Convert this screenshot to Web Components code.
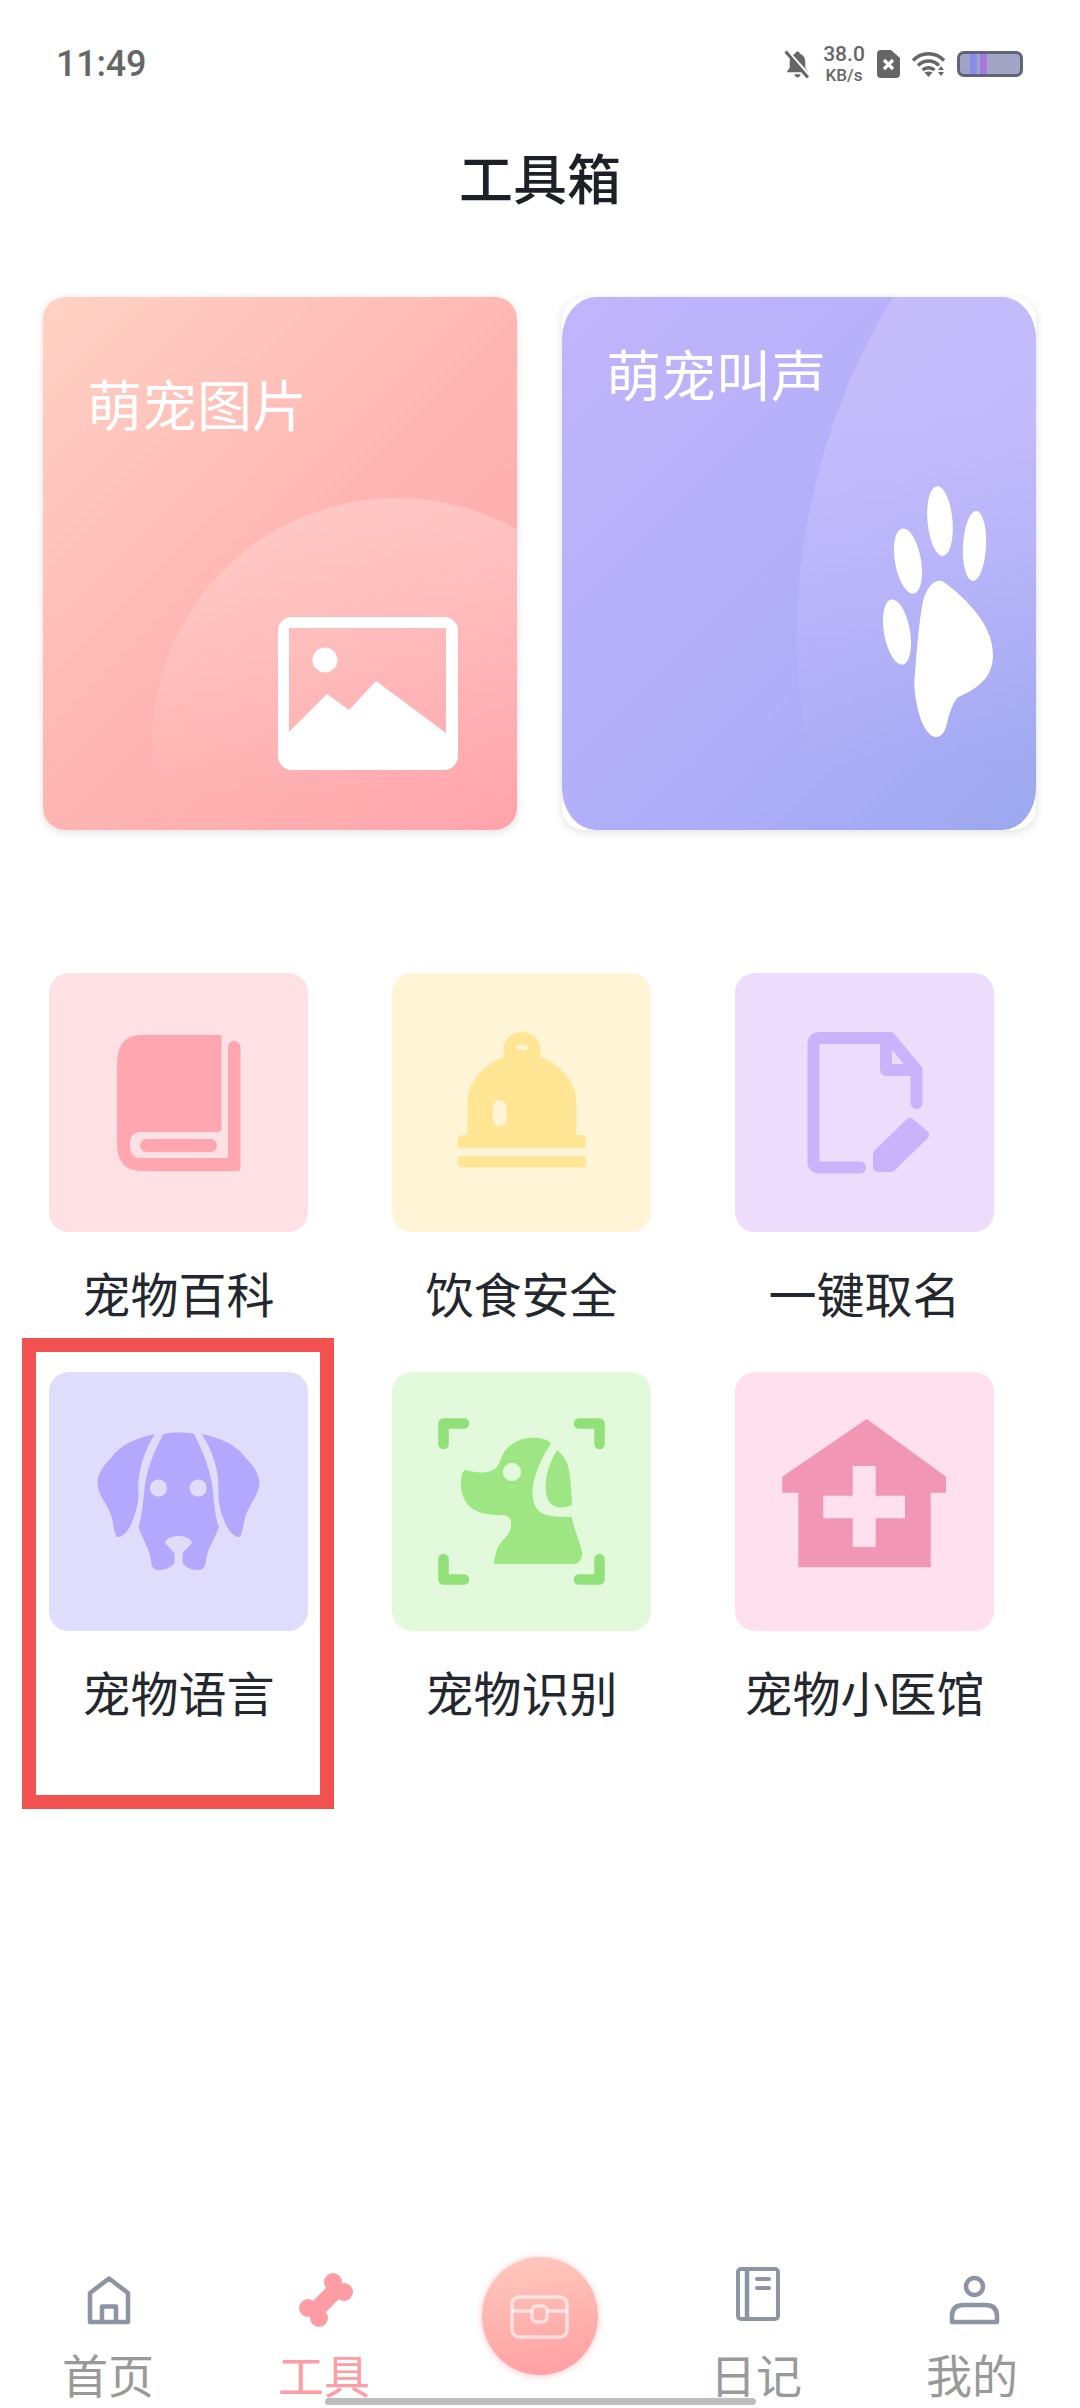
<!doctype html>
<html lang="zh-CN"><head><meta charset="utf-8"><title>工具箱</title>
<style>
html,body{margin:0;padding:0;background:#fff}
body{font-family:"Noto Sans CJK SC","Noto Sans",sans-serif}
svg{display:block}
</style></head><body>
<template id="t-page"><style>
:host{display:flex;flex-direction:column;width:1080px;height:2408px;position:relative;overflow:hidden;background:#fff;font-family:"Noto Sans CJK SC","Noto Sans",sans-serif}
</style><slot></slot></template>

<template id="t-status"><style>
:host{display:flex;align-items:center;justify-content:space-between;height:128px;padding:0 57px 0 56px;box-sizing:border-box;color:#666;font-family:Roboto,"Noto Sans",sans-serif}
.time{font-size:36px;font-weight:500;letter-spacing:-.2px;color:#666}
.right{display:flex;align-items:center;gap:11px}
.speed{display:flex;flex-direction:column;align-items:center;width:44px;font-weight:500;color:#666}
.speed b{font-weight:500;font-size:21px;line-height:21px}
.speed i{font-style:normal;font-size:17px;line-height:17px;margin-top:2px}
.batt{width:66px;height:26px;box-sizing:border-box;border:3px solid #5f6478;border-radius:7px;background:#a2a4c6;display:flex;gap:3px;padding-left:10px;overflow:hidden}
.batt u{display:block;width:7px;background:#8a8cf0}
.batt u+u{background:#a878e0}
</style><div class="time">11:49</div><div class="right"><slot name="bell"></slot><div class="speed"><b>38.0</b><i>KB/s</i></div><slot name="sim"></slot><slot name="wifi"></slot><div class="batt"><u></u><u></u></div></div></template>

<template id="t-title"><style>
:host{display:block;text-align:center;font-size:54px;line-height:98px;height:104px;font-weight:500;color:#1d2127}
</style><slot></slot></template>

<template id="t-cards"><style>
:host{display:flex;gap:45px;padding-left:43px;margin-top:65px}
</style><slot></slot></template>

<template id="t-card"><style>
:host{display:block;position:relative;width:474px;height:533px;border-radius:22px;background:#fff;box-shadow:0 2px 9px rgba(60,60,80,.16)}
.in{position:absolute;inset:0;border-radius:var(--inner,22px);overflow:hidden;background:var(--bg)}
::slotted(svg){position:absolute;left:0;top:0}
.t{position:absolute;left:44px;top:var(--top);font-size:55px;line-height:60px;color:#fff;white-space:nowrap}
</style><div class="in"><slot name="art"></slot></div><div class="t"><slot></slot></div></template>

<template id="t-grid"><style>
:host{display:grid;grid-template-columns:repeat(3,259px);column-gap:84px;row-gap:47px;padding-left:49px;margin-top:143px;position:relative}
.mark{position:absolute;left:22px;top:365px;width:312px;height:471px;box-sizing:border-box;border:14px solid #f1524f}
</style><slot></slot><div class="mark"></div></template>

<template id="t-tile"><style>
:host{display:flex;flex-direction:column;align-items:center;width:259px}
.box{width:259px;height:259px;border-radius:20px;background:var(--bg)}
.l{margin-top:30px;margin-bottom:3px;font-size:48px;line-height:60px;height:60px;color:#24282e;white-space:nowrap}
</style><div class="box"><slot name="icon"></slot></div><div class="l"><slot></slot></div></template>

<template id="t-tabs"><style>
:host{display:grid;grid-template-columns:repeat(5,216px);height:146px;position:relative}
.bar{position:absolute;left:325px;top:136px;width:431px;height:7px;border-radius:4px;background:#bdbdbd}
</style><slot></slot><div class="bar"></div></template>

<template id="t-tab"><style>
:host{display:flex;flex-direction:column;align-items:center;color:#999}
:host([active]){color:#ff9ca4}
.l{margin-top:1px;font-size:46px;line-height:60px;height:60px;white-space:nowrap}
</style><slot name="icon"></slot><div class="l"><slot></slot></div></template>

<template id="t-center"><style>
:host{display:block;justify-self:center;align-self:start;width:116px;height:118px;margin-top:-5px;border-radius:50%;background:linear-gradient(170deg,#ffcabd,#ff9da2);box-shadow:0 1px 7px rgba(255,150,155,.55)}
</style><slot></slot></template>

<pet-page>
  <pet-status>
    <svg slot="bell" width="27" height="29" viewBox="0 0 26 28"><path d="M13 1.500c1.400 0 2.200 1 2.200 2 3.400 1 5.300 4 5.300 7.500v6.200l3 4.300H2.500l3-4.300V11c0-3.500 1.900-6.500 5.300-7.500 0-1 .8-2 2.200-2zM10 23.500h6c-.4 2-1.500 3-3 3s-2.600-1-3-3z" fill="#666"/><path d="M3 .5 25 25" stroke="#fff" stroke-width="2.500"/><path d="M1.500 1.500 23 26.500" stroke="#666" stroke-width="3"/></svg>
    <svg slot="sim" width="23" height="28" viewBox="0 0 23 28"><path d="M4 0h10l9 8v16a4 4 0 0 1-4 4H4a4 4 0 0 1-4-4V4a4 4 0 0 1 4-4z" fill="#666"/><path d="M7 10l9 9M16 10l-9 9" stroke="#fff" stroke-width="3.200"/></svg>
    <svg slot="wifi" width="35" height="26" viewBox="0 0 35 26" fill="none" stroke="#666" stroke-width="3.400"><path d="M2 9.500C10.500 .5 24.500 .5 33 9.500"/><path d="M7 14.500c6-6 15-6 21 0"/><path d="M11.500 19c3.500-3 8.500-3 12 0"/><path d="M17.500 26l-4-4.500c2.500-1.500 5.500-1.500 8 0z" fill="#666" stroke="none"/><path d="M30 15l3 4h-6zM30 25l3-4h-6z" fill="#666" stroke="none"/></svg>
  </pet-status>
  <pet-title>工具箱</pet-title>
  <pet-cards>
    <pet-card style="--bg:linear-gradient(135deg,#ffd2c4 0%,#ffb6b3 50%,#ffa4ab 100%);--top:75px">
      <svg slot="art" width="474" height="533" viewBox="0 0 474 533">
        <defs><linearGradient id="g1" x1="0" y1="0" x2="0" y2="1"><stop offset="0" stop-color="#fff" stop-opacity=".24"/><stop offset=".35" stop-color="#fff" stop-opacity=".12"/><stop offset=".62" stop-color="#fff" stop-opacity=".01"/></linearGradient></defs>
        <circle cx="354" cy="446" r="245" fill="url(#g1)"/>
        <path fill="#fff" fill-rule="evenodd" d="M249 320H401a14 14 0 0 1 14 14V459a14 14 0 0 1-14 14H249a14 14 0 0 1-14-14V334a14 14 0 0 1 14-14zM246 435V331H403V436L333 384 306 413 284 397Z"/>
        <circle cx="282" cy="363" r="12.500" fill="#fff"/>
      </svg>萌宠图片</pet-card>
    <pet-card style="--bg:linear-gradient(135deg,#c2b5fb 0%,#afaef8 62%,#9ca8ef 100%);--top:45px;--inner:34px / 42px">
      <svg slot="art" width="474" height="533" viewBox="0 0 474 533">
        <defs><linearGradient id="g2" x1="0" y1="0" x2="0" y2="1"><stop offset="0" stop-color="#d6c8ff" stop-opacity=".46"/><stop offset=".33" stop-color="#d6c8ff" stop-opacity=".46"/><stop offset=".6" stop-color="#d6c8ff" stop-opacity="0"/></linearGradient></defs>
        <circle cx="885" cy="340" r="650" fill="url(#g2)"/>
        <g fill="#fff">
          <ellipse cx="378" cy="224" rx="12.500" ry="35" transform="rotate(-5 378 224)"/>
          <ellipse cx="412.500" cy="249" rx="11.500" ry="35" transform="rotate(3 412.500 249)"/>
          <ellipse cx="346" cy="264" rx="13" ry="33" transform="rotate(-10 346 264)"/>
          <ellipse cx="335" cy="335" rx="13" ry="33" transform="rotate(-10 335 335)"/>
          <path d="M380 284C392 292 402 301 411 312C423 325 431 342 431 358C431 372 425 381 418 387C410 394 402 397 395 401C390 408 388 415 386 422C384 432 381 440 374 440C366 440 358 425 355 408C352 395 352 385 353 376C355 350 357 325 361 304C365 290 372 282 380 284Z"/>
        </g>
      </svg>萌宠叫声</pet-card>
  </pet-cards>
  <pet-grid>
    <pet-tile style="--bg:#ffe0e5">
      <svg slot="icon" width="259" height="259" viewBox="0 0 259 259" fill="#ffa6b0"><path d="M172.500 62H92Q68 62 68 92V170Q68 198 92 198H188Q191.500 198 191.500 194V76Q191.500 68 185 68Q179 68 179 76V185H92Q81 185 81 172Q81 159 92 159H168Q172.500 159 172.500 155Z"/><rect x="91" y="166" width="77" height="13" rx="6.500"/></svg>宠物百科</pet-tile>
    <pet-tile style="--bg:#fff5d6">
      <svg slot="icon" width="259" height="259" viewBox="0 0 259 259" fill="#ffe594"><path fill-rule="evenodd" d="M130 59C140 59 148.500 67 148.500 77V84C168 92 184.500 108 184.500 130V162H75.500V130C75.500 108 92 92 111.500 84V77C111.500 67 120 59 130 59ZM130 71C126 71 124 73.500 124 75.500C127 77.500 133 77.500 136 75.500C136 73.500 134 71 130 71Z"/><rect x="66" y="162" width="128" height="13" rx="4"/><rect x="66" y="183" width="128" height="11.500" rx="4"/><rect x="101" y="127" width="13.500" height="26" rx="6.700" fill="#fff5d6"/></svg>饮食安全</pet-tile>
    <pet-tile style="--bg:#eedcfd">
      <svg slot="icon" width="259" height="259" viewBox="0 0 259 259" fill="none" stroke="#cbb3fb" stroke-width="12" stroke-linecap="round" stroke-linejoin="round"><path d="M125 194.500H84Q78.500 194.500 78.500 189V71Q78.500 65 84 65H155L181.500 97V130"/><path d="M151 67V97H181" /><path d="M175 150L189 162L156 194H143V181Z" fill="#cbb3fb" stroke-width="10"/></svg>一键取名</pet-tile>
    <pet-tile style="--bg:#e0dcfb">
      <svg slot="icon" width="259" height="259" viewBox="0 0 259 259" fill="#b3a8fd"><path d="M106 62C88 66 72 72 62 86C52 96 48 104 48.500 113C50 124 58 132 62 143C65 152 65 165 69.600 165C75 164 80 158 83 150C87 140 89.500 132 89.500 122C88 104 93 82 106 62Z"/><path d="M152.800 62C170.800 66 186.800 72 196.800 86C206.800 96 210.800 104 210.300 113C208.800 124 200.800 132 196.800 143C193.800 152 193.800 165 189.200 165C183.800 164 178.800 158 175.800 150C171.800 140 169.300 132 169.300 122C170.800 104 165.800 82 152.800 62Z"/><path fill-rule="evenodd" d="M114.500 62C122 60 137 60 145 62C150 72 160 92 163 112C165 130 166 145 170 155C165 168 158 178 157 188C156.500 198 152 198 148 198C142 198 137 195 133.600 191V181L143 171C142 166 136 164 129.400 164C123 164 117 166 116 171L125.500 181V191C122 195 117 198 111 198C107 198 102.500 198 102 188C101 178 94 168 89.500 155C93 145 94 130 96 112C99 92 109 72 114.500 62ZM109.600 107.500C105 107.500 101 111 101 116C101 121 105 124.500 109.600 124.500C114 124.500 118 121 118 116C118 111 114 107.500 109.600 107.500ZM149.200 107.500C144.500 107.500 140.700 111 140.700 116C140.700 121 144.500 124.500 149.200 124.500C153.700 124.500 157.700 121 157.700 116C157.700 111 153.700 107.500 149.200 107.500Z"/></svg>宠物语言</pet-tile>
    <pet-tile style="--bg:#e2fadb">
      <svg slot="icon" width="259" height="259" viewBox="0 0 259 259"><g fill="none" stroke="#92e07a" stroke-width="10.500" stroke-linecap="round" stroke-linejoin="round"><path d="M51.500 72V51.500H72"/><path d="M187 51.500H207.500V72"/><path d="M51.500 187V207.500H72"/><path d="M187 207.500H207.500V187"/></g><path fill="#9de683" fill-rule="evenodd" d="M138 66C146 65 154 67 159 71C151 84 143 100 140.700 115C140 125 141 132 146 138C151 143 157 145 180 145C181 155 188 170 190.400 181C190 187 187 192 182 192H102C103 182 105 175 110 169C116 163 120 158 119 150C118.500 146 116 143 110 143C98 143 87 142 78 135C71 128 68 118 69 108C69.500 102 71 98 74 98C82 101 96 102 103 97C107 94 108 88 112 80C118 72 128 66 138 66ZM120 91C115 91 111 95 111 100C111 105 115 109 120 109C125 109 129 105 129 100C129 95 125 91 120 91Z"/><path fill="#9de683" d="M165 78C172 84 176 90 177 99C179 110 179.500 122 180 133C175 135 169 136 165 135C158 133 155 128 154 120C152 105 158 90 165 78Z"/></svg>宠物识别</pet-tile>
    <pet-tile style="--bg:#ffe0ec">
      <svg slot="icon" width="259" height="259" viewBox="0 0 259 259"><path fill="#f196b4" fill-rule="evenodd" d="M131.700 47L211 104.700V120.700H195.700V195.300H63.300V120.700H47.300V104.700ZM117.700 94V123.700H88.300V146.300H117.700V175H140.700V146.300H170V123.700H140.700V94Z"/></svg>宠物小医馆</pet-tile>
  </pet-grid>
  <div style="flex:1"></div>
  <pet-tabs>
    <pet-tab>
      <svg slot="icon" width="80" height="80" viewBox="0 0 80 80" fill="none" stroke="#8d95a3" stroke-width="4.500" stroke-linejoin="round"><path d="M41 16.500L60 31V60H22V31Z"/><path d="M34 60V44.500H48V60"/></svg>首页</pet-tab>
    <pet-tab active>
      <svg slot="icon" width="80" height="80" viewBox="0 0 80 80" fill="#ff9ca4"><path d="M29 51L55 25" stroke="#ff9ca4" stroke-width="17"/><circle cx="49" cy="20" r="9"/><circle cx="60" cy="30" r="9"/><circle cx="24" cy="46" r="9"/><circle cx="35" cy="56" r="9"/></svg>工具</pet-tab>
    <pet-center>
      <svg width="116" height="118" viewBox="0 0 116 118" fill="none" stroke="#fff" stroke-opacity=".6" stroke-width="3.500" style="filter:blur(.6px)"><rect x="30" y="40" width="55" height="40" rx="7"/><path d="M30 54H50M65 54H85"/><rect x="50" y="49" width="15" height="16" rx="5"/></svg>
    </pet-center>
    <pet-tab>
      <svg slot="icon" width="80" height="80" viewBox="0 0 80 80" fill="none" stroke="#8d95a3" stroke-width="4" stroke-linecap="round" stroke-linejoin="round"><rect x="22" y="7" width="40" height="50" rx="3"/><path d="M31 8V56" stroke-width="4.500"/><path d="M41 17H53M41 26H53"/></svg>日记</pet-tab>
    <pet-tab>
      <svg slot="icon" width="80" height="80" viewBox="0 0 80 80" fill="none" stroke="#8d95a3" stroke-width="4.500" stroke-linejoin="round"><circle cx="42.500" cy="24.500" r="8.500"/><path d="M20 60V54Q20 43 32 43H53Q65 43 65 54V60Z"/></svg>我的</pet-tab>
  </pet-tabs>
</pet-page>
<script>
const defs={ 'pet-page':'t-page','pet-status':'t-status','pet-title':'t-title','pet-cards':'t-cards','pet-card':'t-card','pet-grid':'t-grid','pet-tile':'t-tile','pet-tabs':'t-tabs','pet-tab':'t-tab','pet-center':'t-center'};
for(const [name,id] of Object.entries(defs)){
  customElements.define(name,class extends HTMLElement{
    constructor(){super();this.attachShadow({mode:'open'}).appendChild(document.getElementById(id).content.cloneNode(true));}
  });
}
</script>
</body></html>
